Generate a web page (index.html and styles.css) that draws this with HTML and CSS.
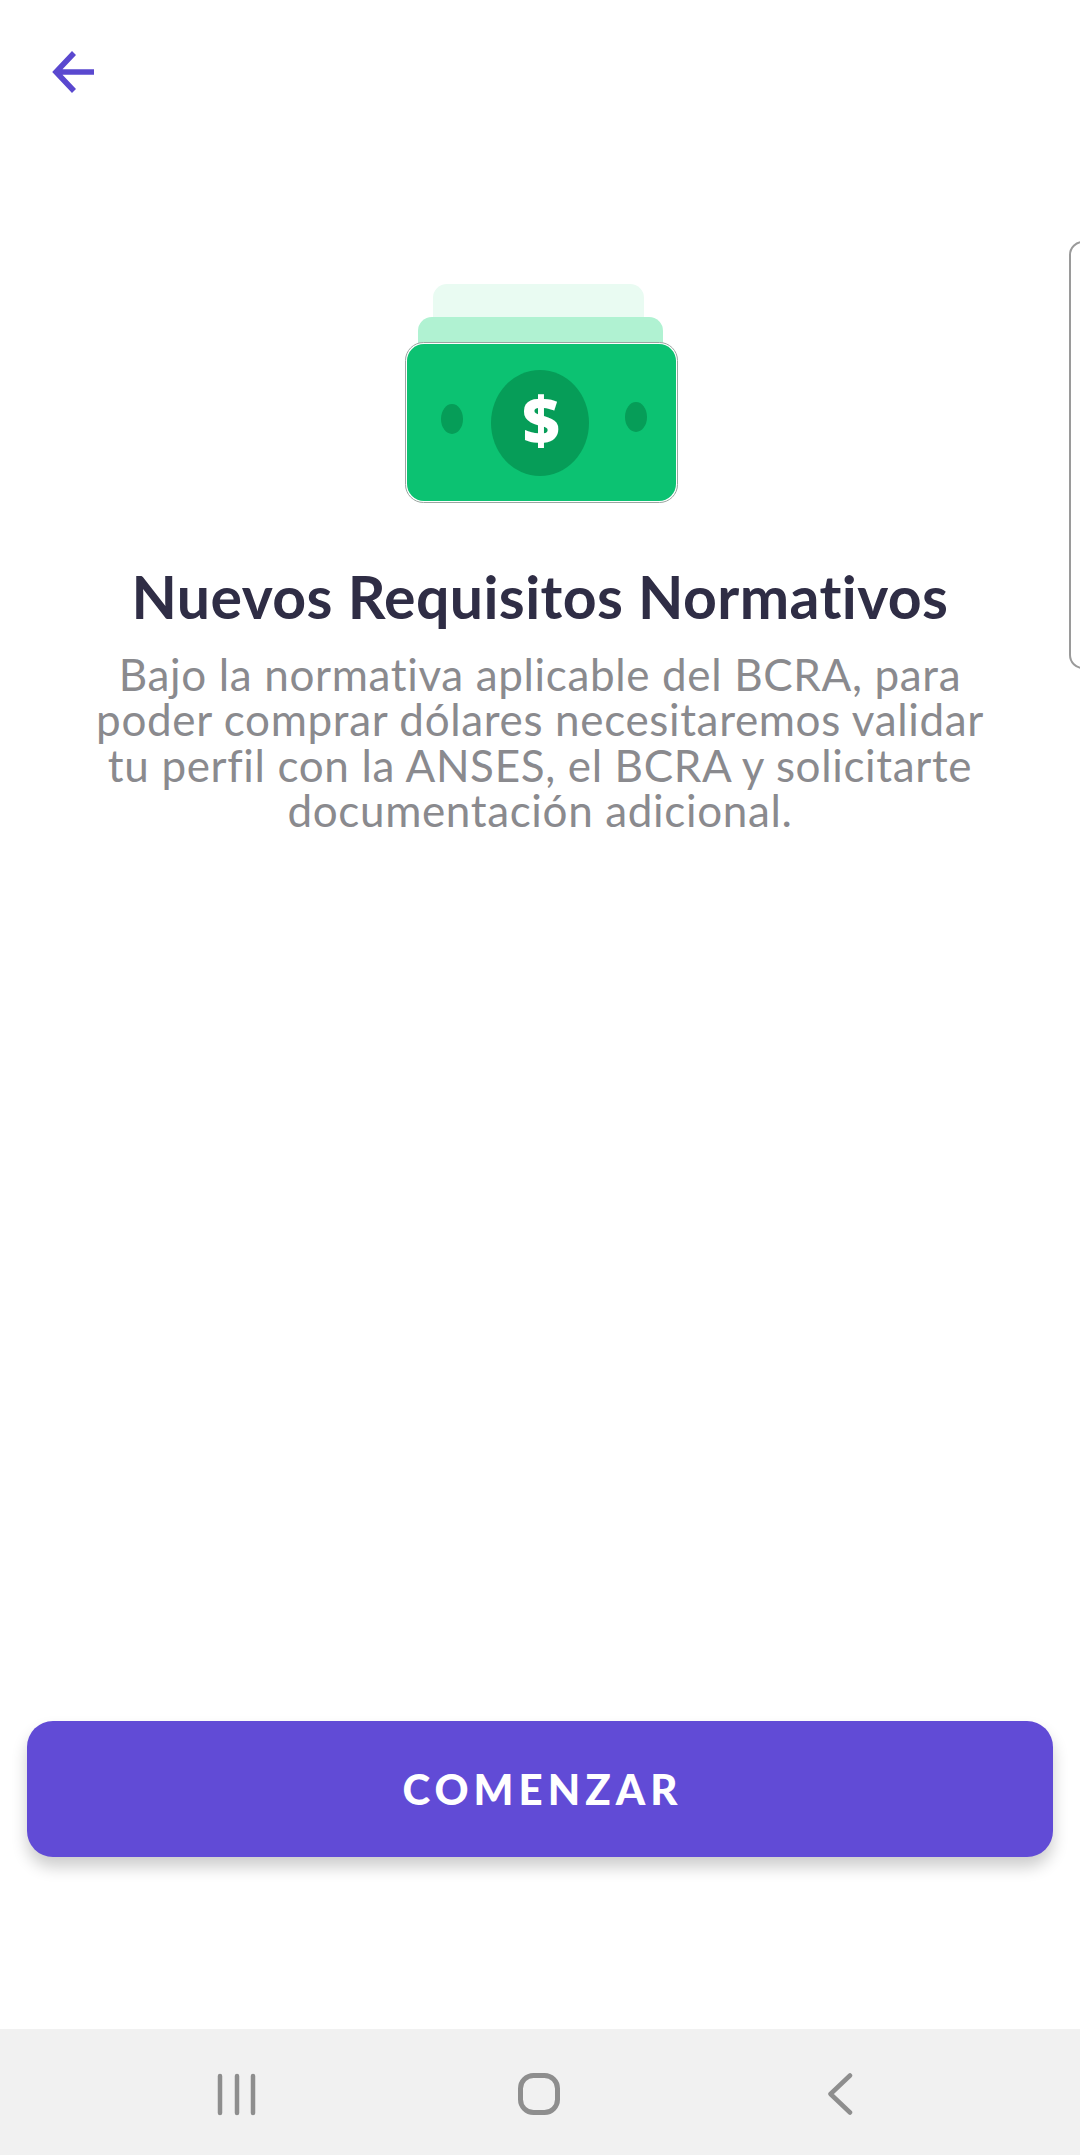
FILE: index.html
```html
<!DOCTYPE html>
<html lang="es">
<head>
<meta charset="utf-8">
<title>Nuevos Requisitos Normativos</title>
<link rel="stylesheet" href="styles.css">
</head>
<body>
<div class="screen">
  <header class="topbar">
    <svg class="back-arrow" viewBox="0 0 46 44" width="46" height="44" aria-hidden="true">
      <path d="M43 22H6M23 3L5 22L23 41" fill="none" stroke="#5a48cf" stroke-width="5.500"/>
    </svg>
  </header>
  <main class="hero">
    <svg class="money" viewBox="0 0 282 230" width="282" height="230" aria-hidden="true">
      <rect x="34" y="4" width="211" height="50" rx="14" fill="#e9fbf2"/>
      <rect x="19" y="37" width="245" height="50" rx="14" fill="#b0f2d2"/>
      <rect x="6.500" y="62.500" width="272" height="160" rx="18" fill="#fff" stroke="#9aa5a0" stroke-width="1"/>
      <rect x="8" y="64" width="269" height="157" rx="17" fill="#0cc272"/>
      <ellipse cx="141" cy="143" rx="49" ry="53" fill="#069d58"/>
      <ellipse cx="53" cy="139" rx="11" ry="15" fill="#069d58"/>
      <ellipse cx="237" cy="137" rx="11" ry="15" fill="#069d58"/>
      <text class="dollar" x="142" y="164" text-anchor="middle">$</text>
    </svg>
    <h1 class="title">Nuevos Requisitos Normativos</h1>
    <p class="body-text">Bajo la normativa aplicable del BCRA, para<br>poder comprar dólares necesitaremos validar<br>tu perfil con la ANSES, el BCRA y solicitarte<br>documentación adicional.</p>
  </main>
  <div class="action">
    <button class="cta" type="button">COMENZAR</button>
  </div>
  <nav class="navbar">
    <svg viewBox="0 0 40 44" width="40" height="44" aria-hidden="true">
      <path d="M3 4V41M20 4V41M36 4V41" fill="none" stroke="#8e8e8e" stroke-width="4.500" stroke-linecap="round"/>
    </svg>
    <svg viewBox="0 0 44 44" width="44" height="44" aria-hidden="true">
      <rect x="3.500" y="3.500" width="37" height="37" rx="13" fill="none" stroke="#8e8e8e" stroke-width="5"/>
    </svg>
    <svg viewBox="-6 0 32 44" width="32" height="44" aria-hidden="true">
      <path d="M23 3.500L3.500 22L23 40.500" fill="none" stroke="#8e8e8e" stroke-width="4.500" stroke-linecap="round" stroke-linejoin="round"/>
    </svg>
  </nav>
  <div class="edge-panel"></div>
</div>
</body>
</html>
```

FILE: styles.css
```css
* { box-sizing: border-box; }
html, body { margin: 0; padding: 0; background: #fff; }
body {
  font-family: Lato, "Open Sans", sans-serif;
  font-variant-ligatures: none;
}

.screen {
  position: relative;
  width: 1080px;
  height: 2155px;
  overflow: hidden;
  display: flex;
  flex-direction: column;
  background: #fff;
}

.topbar {
  height: 280px;
  padding: 50px 0 0 51px;
  flex: none;
}
.back-arrow { display: block; }

.hero {
  flex: 1;
  display: flex;
  flex-direction: column;
  align-items: center;
}
.money { display: block; flex: none; }
.dollar {
  font-family: "Open Sans", sans-serif;
  font-weight: 800;
  font-size: 65px;
  fill: #fff;
}
.title {
  margin: 54px 0 0;
  font-size: 59px;
  line-height: 66px;
  font-weight: 700;
  letter-spacing: 0.400px;
  color: #2f2d45;
  text-align: center;
  white-space: nowrap;
}
.body-text {
  margin: 22px 0 0;
  font-size: 44px;
  line-height: 45.300px;
  font-weight: 400;
  letter-spacing: 0.650px;
  color: #8a8a8e;
  text-align: center;
  white-space: nowrap;
}

.action {
  flex: none;
  padding: 0 27px 172px;
}
.cta {
  display: block;
  width: 100%;
  height: 136px;
  padding: 0 0 0 5px;
  border: 0;
  border-radius: 26px;
  background: #614bd6;
  color: #fff;
  font-family: Lato, sans-serif;
  font-size: 42px;
  font-weight: 900;
  letter-spacing: 5px;
  box-shadow: 0 10px 16px rgba(0, 0, 0, 0.2);
}

.navbar {
  flex: none;
  height: 126px;
  background: #f1f1f1;
  display: flex;
  justify-content: space-between;
  align-items: center;
  padding: 4px 227px 0 217px;
}

.edge-panel {
  position: absolute;
  top: 241px;
  left: 1069px;
  width: 30px;
  height: 428px;
  border: 2px solid #9a9a9a;
  border-radius: 14px;
  background: #fff;
}
```
